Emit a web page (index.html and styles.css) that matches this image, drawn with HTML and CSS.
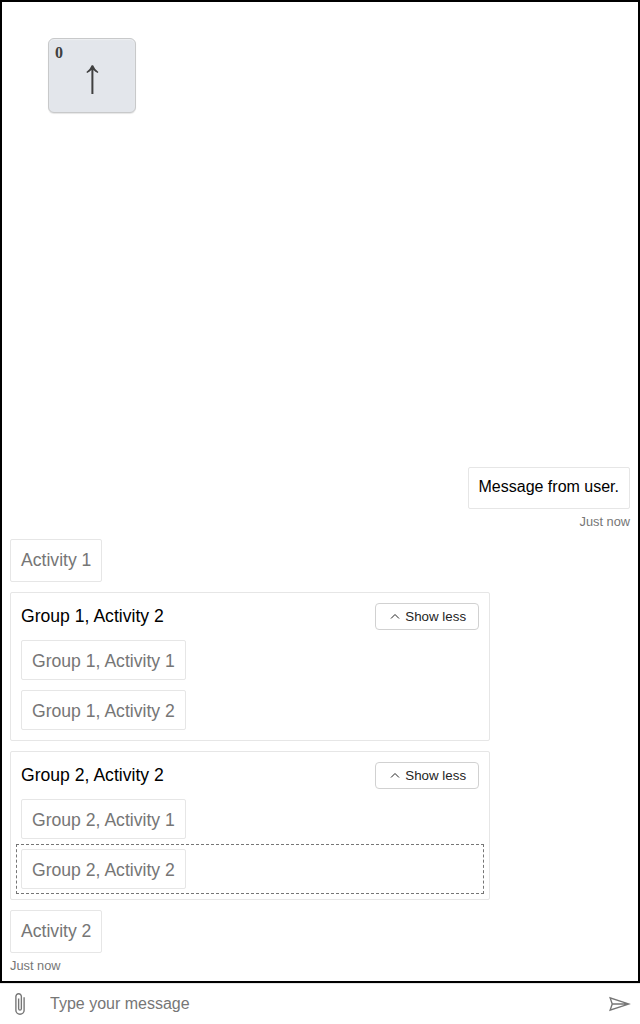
FILE: index.html
```html
<!DOCTYPE html>
<html lang="en">
<head>
<meta charset="utf-8">
<title>Web Chat</title>
<link rel="stylesheet" href="styles.css">
</head>
<body>
<div class="webchat">
  <main class="transcript">
    <div class="keycap"><span class="keycap-index">0</span><svg class="keycap-arrow" width="13" height="30" viewBox="0 0 13 30"><path d="M5.4 29V5Q3.4 6.9 1.1 8.1L.4 7Q4.3 4.1 5.7.3H7.1Q8.5 4.1 12.4 7L11.7 8.1Q9.4 6.9 7.4 5V29Z"/></svg></div>
    <section class="user-message">
      <div class="bubble">Message from user.</div>
      <div class="status">Just now</div>
    </section>
    <div class="activity">Activity 1</div>
    <section class="group">
      <header class="group-header">
        <span>Group 1, Activity 2</span>
        <button class="toggle"><svg width="10" height="7" viewBox="0 0 10 7"><path d="M1 5.5 5 1.5 9 5.5"/></svg>Show less</button>
      </header>
      <div class="row"><div class="nested">Group 1, Activity 1</div></div>
      <div class="row"><div class="nested">Group 1, Activity 2</div></div>
    </section>
    <section class="group">
      <header class="group-header">
        <span>Group 2, Activity 2</span>
        <button class="toggle"><svg width="10" height="7" viewBox="0 0 10 7"><path d="M1 5.5 5 1.5 9 5.5"/></svg>Show less</button>
      </header>
      <div class="row"><div class="nested">Group 2, Activity 1</div></div>
      <div class="row focused"><div class="nested">Group 2, Activity 2</div></div>
    </section>
    <div class="activity">Activity 2</div>
    <div class="status">Just now</div>
  </main>
  <footer class="send-box">
    <button class="icon-button"><svg width="28" height="28" viewBox="0 0 25.75 46"><path d="M20.75 11.75v21.37a7.69 7.69 0 0 1-.62 3.07 7.95 7.95 0 0 1-4.19 4.19 7.89 7.89 0 0 1-6.13 0 7.95 7.95 0 0 1-4.19-4.19A7.69 7.69 0 0 1 5 33.12v-22.5a5.27 5.27 0 0 1 .45-2.17 5.69 5.69 0 0 1 3-3 5.48 5.48 0 0 1 4.35 0 5.69 5.69 0 0 1 3 3 5.27 5.27 0 0 1 .45 2.17v20.25a3.38 3.38 0 0 1-6.75 0V14h2.25v16.87a1.13 1.13 0 0 0 2.25 0V10.62a3.38 3.38 0 0 0-6.75 0v22.5a5.63 5.63 0 0 0 11.25 0V11.75z"/></svg></button>
    <input class="message-input" type="text" placeholder="Type your message">
    <button class="icon-button"><svg width="28" height="28" viewBox="0 0 45.7 33.8"><path clip-rule="evenodd" d="M8.55 25.25l21.67-7.25H11zm2.41-9.47h19.26l-21.67-7.23zm-6 13l4-11.9L5 5l35.7 11.9z"/></svg></button>
  </footer>
</div>
</body>
</html>
```

FILE: styles.css
```css
* { box-sizing: border-box; }
body { margin: 0; background: #fff; font-family: "Liberation Sans", Arial, sans-serif; }
button { font-family: inherit; cursor: pointer; }
.webchat { display: flex; flex-direction: column; height: 1024px; }
.transcript {
  position: relative;
  display: flex;
  flex-direction: column;
  justify-content: flex-end;
  align-items: flex-start;
  height: 983px;
  padding: 0 8px 8px;
  border: 2px solid #000;
}
.keycap {
  position: absolute;
  left: 46px;
  top: 36px;
  width: 88px;
  height: 75px;
  background: #e3e6eb;
  border: 1px solid #c8c9ca;
  border-radius: 6px;
  box-shadow: 0 1px 1px rgba(0, 0, 0, .1), inset 0 1px 1px rgba(255, 255, 255, .4);
  color: #404040;
}
.keycap-index {
  position: absolute;
  left: 6px;
  top: 5px;
  font: bold 16px/18px "Liberation Serif", serif;
}
.keycap-arrow {
  position: absolute;
  left: 37px;
  top: 26px;
  fill: #404040;
}
.user-message { align-self: flex-end; text-align: right; margin-bottom: 10px; }
.bubble {
  height: 42px;
  padding: 9px 10px;
  border: 1px solid #e6e6e6;
  border-radius: 2px;
  font-size: 16px;
  line-height: 20px;
}
.status { padding-top: 5px; font-size: 12.8px; line-height: 15px; color: #767676; }
.activity {
  height: 43px;
  padding: 10px;
  border: 1px solid #e6e6e6;
  border-radius: 2px;
  font-size: 17.6px;
  line-height: 20px;
  color: #767676;
}
.group {
  width: 480px;
  height: 149px;
  margin-top: 10px;
  padding: 10px;
  border: 1px solid #e6e6e6;
  border-radius: 2px;
}
.group + .activity { margin-top: 10px; }
.group-header {
  display: flex;
  justify-content: space-between;
  height: 27px;
  font-size: 17.6px;
  line-height: 27px;
}
.toggle {
  display: flex;
  align-items: center;
  gap: 5.3px;
  width: 104px;
  height: 27px;
  padding: 0 0 0 14px;
  background: #fff;
  border: 1px solid #d1d1d1;
  border-radius: 4px;
  font-size: 13.33px;
  color: #242424;
}
.toggle svg { fill: none; stroke: #242424; stroke-width: 1; }
.row { display: flex; margin-top: 10px; }
.nested {
  height: 40px;
  padding: 10px;
  border: 1px solid #e6e6e6;
  border-radius: 2px;
  font-size: 17.6px;
  line-height: 20px;
  color: #767676;
}
.focused { outline: 1px dashed #767676; outline-offset: 4px; }
.send-box { display: flex; height: 41px; border-top: 1px solid #e6e6e6; }
.icon-button {
  display: flex;
  align-items: center;
  justify-content: center;
  width: 40px;
  height: 40px;
  padding: 0;
  border: 0;
  background: none;
  fill: #767676;
}
.message-input {
  flex: 1;
  min-width: 0;
  padding: 0 10px;
  border: 0;
  outline: 0;
  background: none;
  font: 16px "Liberation Sans", Arial, sans-serif;
}
.message-input::placeholder { color: #767676; }
```
